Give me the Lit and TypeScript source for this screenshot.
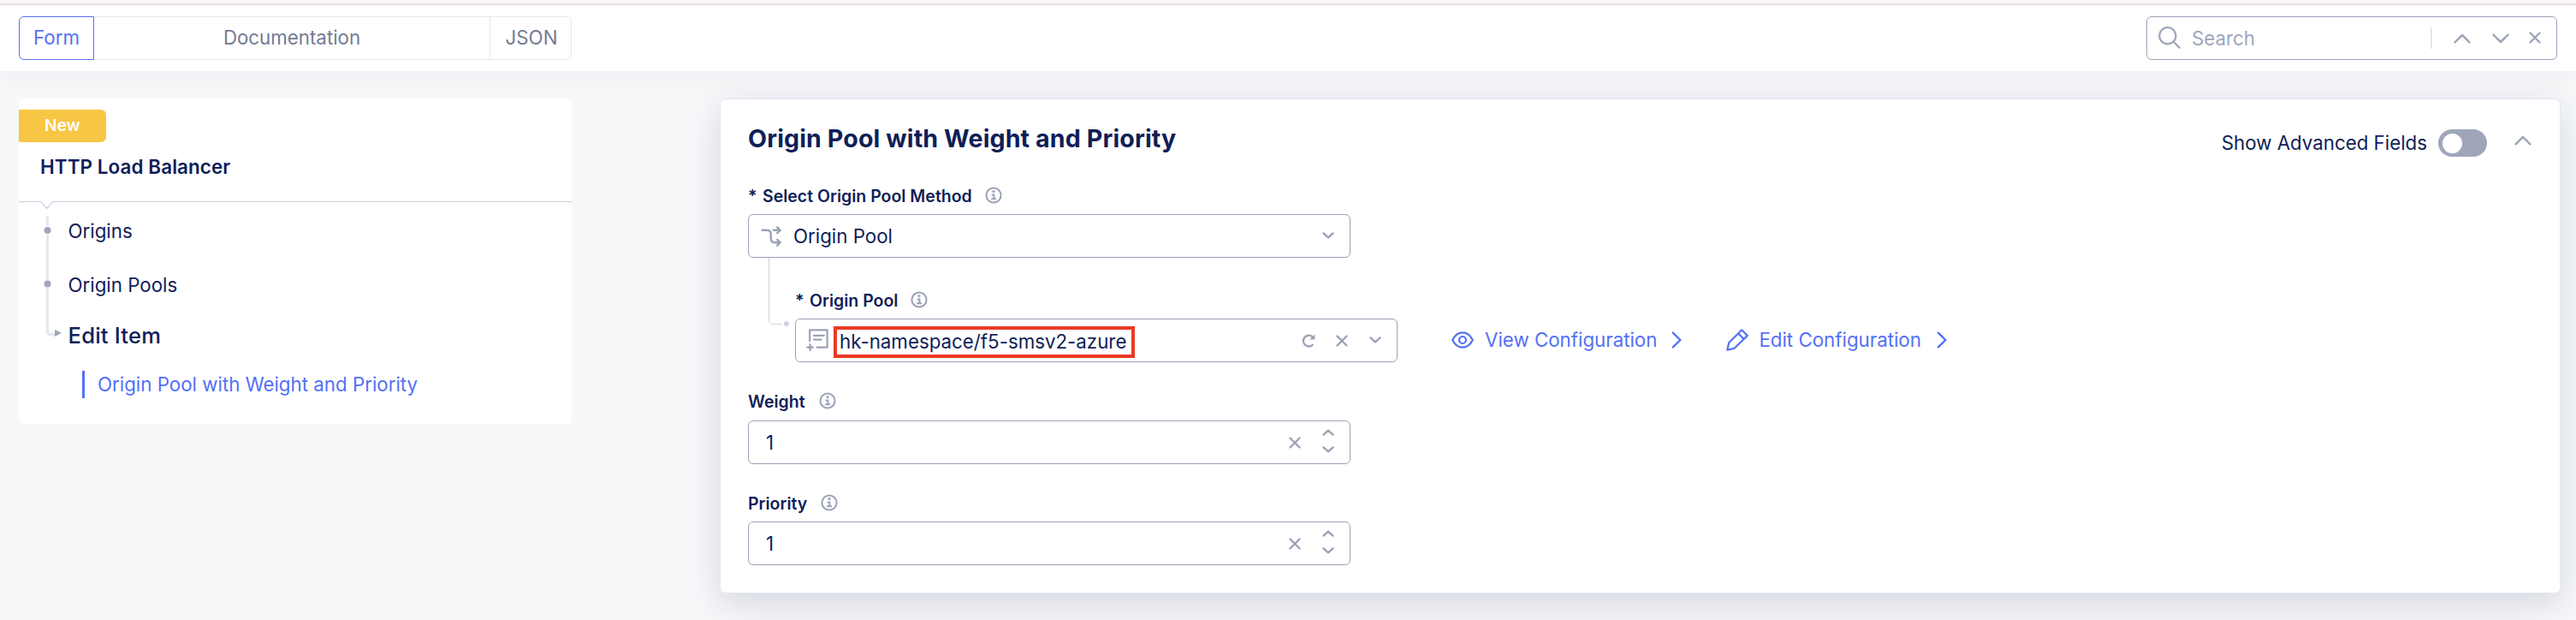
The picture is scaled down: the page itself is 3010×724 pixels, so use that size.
import { LitElement, html, css } from "lit";
import { customElement } from "lit/decorators.js";

const stroke = (w: number, h: number, d: string, sw = 2.4) => html`
  <svg class="ico" width=${w} height=${h} viewBox="0 0 ${w} ${h}" fill="none" stroke="currentColor"
    stroke-width=${sw} stroke-linecap="round" stroke-linejoin="round"><path d=${d}></path></svg>`;

const bigUp = () => stroke(20, 12, "M1.5 10.3 L10 2 L18.5 10.3", 2.5);
const bigDown = () => stroke(20, 12, "M1.5 1.7 L10 10 L18.5 1.7", 2.5);
const smallUp = () => stroke(14, 8, "M1.5 6.6 L7 1.6 L12.5 6.6", 2.4);
const smallDown = () => stroke(14, 8, "M1.5 1.4 L7 6.4 L12.5 1.4", 2.4);
const cross = () => stroke(14, 14, "M1.5 1.5 L12.5 12.5 M12.5 1.5 L1.5 12.5", 2.4);
const right = () => stroke(12, 20, "M1.8 1.6 L10.4 10 L1.8 18.4", 2.4);

const info = () => html`
  <svg class="info" width="20" height="20" viewBox="0 0 20 20" fill="none" stroke="currentColor">
    <circle cx="10" cy="10" r="8.6" stroke-width="2"></circle>
    <circle cx="10" cy="5.6" r="1.6" fill="currentColor" stroke="none"></circle>
    <path d="M7.6 9.4 H10.4 V14 M7.2 14.3 H13" stroke-width="2"></path>
  </svg>`;

const search = () => html`
  <svg width="26" height="26" viewBox="0 0 26 26" fill="none" stroke="currentColor" stroke-width="2.2" stroke-linecap="round">
    <circle cx="10.8" cy="10.8" r="9.6"></circle><path d="M18 18 L24.6 24.6"></path>
  </svg>`;

const branch = () => html`
  <svg width="24" height="24" viewBox="0 0 24 24" fill="none" stroke="currentColor" stroke-width="2.4" stroke-linecap="round" stroke-linejoin="round">
    <path d="M1.6 4.8 H7 Q11.8 4.8 11.8 9.6 V14.6 Q11.8 19.2 16.2 19.2 H22"></path>
    <path d="M14.8 4.8 H22 M19.2 1.4 L22.6 4.8 L19.2 8.2 M19.2 15.8 L22.6 19.2 L19.2 22.6"></path>
  </svg>`;

const listAdd = () => html`
  <svg width="26" height="26" viewBox="0 0 26 26" fill="none" stroke="currentColor" stroke-width="2.2" stroke-linecap="round" stroke-linejoin="round">
    <path d="M4.2 14.2 V1.4 H24.6 V21.6 H12.6"></path>
    <path d="M9 7.8 H21 M9 12.6 H17.4 M4.6 18.2 V25 M1.2 21.6 H8"></path>
  </svg>`;

const refresh = () => html`
  <svg width="16" height="16" viewBox="0 0 16 16" fill="none" stroke="currentColor" stroke-width="2.3" stroke-linecap="round">
    <path d="M12.7 12.8 A6.4 6.4 0 1 1 12.2 3"></path>
    <path d="M15.4 0.4 V6.6 H9.2 Z" fill="currentColor" stroke="none"></path>
  </svg>`;

const eye = () => html`
  <svg width="26" height="20" viewBox="0 0 26 20" fill="none" stroke="currentColor" stroke-width="2.2" stroke-linejoin="round">
    <path d="M1.2 10 C4 4.4 8.2 1.3 13 1.3 C17.8 1.3 22 4.4 24.8 10 C22 15.6 17.8 18.7 13 18.7 C8.2 18.7 4 15.6 1.2 10 Z"></path>
    <circle cx="13" cy="10" r="4"></circle>
  </svg>`;

const pencil = () => html`
  <svg width="26" height="26" viewBox="0 0 26 26" fill="none" stroke="currentColor" stroke-width="2.2" stroke-linejoin="round">
    <path d="M1.3 24.7 L3.2 16.2 L18.2 1.3 L24.8 7.9 L9.6 22.8 Z M14.2 5.4 L20.7 11.9"></path>
  </svg>`;

@customElement("nav-panel")
class NavPanel extends LitElement {
  static styles = css`
    :host { display: block; width: 646px; flex: none; color: #0f1e57; }
    .top { position: relative; height: 121px; box-sizing: border-box; background: #fff; border-radius: 6px; padding-top: 13px; }
    .top::after { content: ""; position: absolute; left: 0; right: 0; bottom: 0; height: 1px; background: #cdd2df; }
    .badge { width: 102px; height: 38px; line-height: 38px; background: #f7c644; color: #fff; border-radius: 0 6px 6px 0; font-size: 19px; font-weight: 600; text-align: center; letter-spacing: .2px; }
    .name { margin: 14px 0 0 25px; line-height: 30px; font-size: 22.4px; font-weight: 600; letter-spacing: .1px; }
    .notch { position: absolute; left: 25px; top: 119px; z-index: 1; }
    .body { height: 259px; box-sizing: border-box; background: #fff; border-radius: 6px; display: flex; }
    .rail { flex: none; width: 57px; }
    .items { padding-top: 19px; font-size: 22.3px; }
    .item { line-height: 30px; padding-left: .5px; }
    .item + .item { margin-top: 33px; }
    .items .current { font-size: 25.6px; margin-top: 29px; font-weight: 500; letter-spacing: .2px; }
    .leaf { margin: 26px 0 0 17px; border-left: 3px solid #5470f6; padding-left: 15px; line-height: 32px; color: #5470f6; }
  `;
  render() {
    return html`
      <div class="top">
        <div class="badge">New</div>
        <div class="name">HTTP Load Balancer</div>
        <svg class="notch" width="16" height="11" viewBox="0 0 16 11"><path d="M0 0 H16 L8 9.4 Z" fill="#fff"></path><path d="M.7 1.5 L7.8 9.3 L14.9 1.5" fill="none" stroke="#cdd2df" stroke-width="1.3"></path></svg>
      </div>
      <div class="body">
        <svg class="rail" width="57" height="180" viewBox="0 0 57 180" fill="none">
          <path d="M33.5 17 V28 M33.5 38 V91 M33.5 100 V152 Q33.5 154.5 36 154.5 H43" stroke="#e4e7f1" stroke-width="3"></path>
          <circle cx="33.5" cy="33" r="4" fill="#9fa6ba"></circle>
          <circle cx="33.5" cy="95.5" r="4" fill="#9fa6ba"></circle>
          <path d="M42 149 L50 153 L42 157 Z" fill="#9fa6ba"></path>
        </svg>
        <div class="items">
          <div class="item">Origins</div>
          <div class="item">Origin Pools</div>
          <div class="item current">Edit Item</div>
          <div class="leaf">Origin Pool with Weight and Priority</div>
        </div>
      </div>`;
  }
}

@customElement("pool-form")
class PoolForm extends LitElement {
  static styles = css`
    :host { display: block; box-sizing: border-box; flex: 1; height: 578px; background: #fff; border: 1px solid #e4e7f1; border-radius: 6px; box-shadow: 0 12px 42px rgba(20, 30, 75, .15); color: #0f1e57; padding: 26px 33px 0 32px; font-size: 22.3px; }
    svg { display: block; flex: none; }
    .head { display: flex; height: 50px; }
    .title { font-size: 28.6px; font-weight: 700; line-height: 40px; flex: 1; letter-spacing: .12px; }
    .adv { line-height: 50px; }
    .toggle { width: 57px; height: 32px; box-sizing: border-box; border-radius: 16px; background: #9fa6ba; margin: 9px 32px 0 13px; padding: 4.5px; }
    .knob { width: 23px; height: 23px; border-radius: 50%; background: #fff; }
    .chev { color: #9fa6ba; margin-top: 16px; }
    .label { display: flex; align-items: center; height: 30px; line-height: 30px; font-size: 19.5px; font-weight: 600; white-space: nowrap; }
    .label .info { color: #9ba2b6; margin: -3px 0 0 16px; }
    .star { width: 17px; }
    .label .star + .info { margin-left: 15px; }
    .first { margin-top: 22px; }
    .box { width: 704px; height: 51px; box-sizing: border-box; border: 1px solid #9ba2b6; border-radius: 6px; margin-top: 6px; display: flex; align-items: center; color: #9ba2b6; }
    .val { color: #0f1e57; flex: 1; }
    .branch { margin-left: 14px; }
    .branch + .val { margin-left: 14px; }
    .down { margin: -2px 18px 0 0; }
    .nest { display: flex; height: 122px; }
    .wire { width: 55px; }
    .sub { padding-top: 35px; }
    .line { display: flex; align-items: center; }
    .listadd { margin: -2px 6px 0 12px; }
    .mark { box-sizing: border-box; width: 352px; height: 37px; border: 4px solid #ea3a24; line-height: 27px; padding-left: 3px; margin-top: 3px; color: #0f1e57; white-space: nowrap; }
    .grow { flex: 1; }
    .g1 { margin-right: 24px; }
    .g2 { margin-right: 25px; }
    .link { display: flex; align-items: center; color: #5470f6; margin-top: 5px; line-height: 30px; }
    .view { margin-left: 63px; }
    .edit { margin-left: 52px; }
    .txt { margin: 0 17px 0 13px; white-space: nowrap; }
    .edit .txt { margin: 0 18px 0 12px; }
    .gap { margin-top: 31px; }
    .gap .n { margin-top: 7px; }
    .gap2 { margin-top: 31px; }
    .n .val { padding-left: 20px; }
    .spin { display: grid; gap: 12px; margin: -3px 18px 0 25px; }
  `;
  number(label: string, value: string, cls: string) {
    return html`<div class=${cls}>
      <div class="label">${label}${info()}</div>
      <div class="box n"><div class="val">${value}</div>${cross()}<div class="spin">${smallUp()}${smallDown()}</div></div>
    </div>`;
  }
  render() {
    return html`
      <div class="head">
        <div class="title">Origin Pool with Weight and Priority</div>
        <div class="adv">Show Advanced Fields</div>
        <div class="toggle"><div class="knob"></div></div>
        <div class="chev">${bigUp()}</div>
      </div>
      <div class="label first"><span class="star">*</span>Select Origin Pool Method${info()}</div>
      <div class="box"><div class="branch">${branch()}</div><div class="val">Origin Pool</div><div class="down">${smallDown()}</div></div>
      <div class="nest">
        <svg class="wire" width="55" height="122" viewBox="0 0 55 122" fill="none">
          <path d="M24.5 0 V72 Q24.5 77.5 30 77.5 H40" stroke="#cdd2df"></path><circle cx="45" cy="77" r="3" fill="#cdd2df"></circle>
        </svg>
        <div class="sub">
          <div class="label"><span class="star">*</span>Origin Pool${info()}</div>
          <div class="line">
            <div class="box">
              <div class="listadd">${listAdd()}</div>
              <div class="mark">hk-namespace/f5-smsv2-azure</div>
              <div class="grow"></div>
              <div class="g1">${refresh()}</div><div class="g2">${cross()}</div><div class="down">${smallDown()}</div>
            </div>
            <div class="link view">${eye()}<span class="txt">View Configuration</span>${right()}</div>
            <div class="link edit">${pencil()}<span class="txt">Edit Configuration</span>${right()}</div>
          </div>
        </div>
      </div>
      ${this.number("Weight", "1", "gap")}
      ${this.number("Priority", "1", "gap2")}`;
  }
}

@customElement("app-root")
class AppRoot extends LitElement {
  static styles = css`
    :host { display: block; width: 3010px; height: 724px; overflow: hidden; background: #f7f8fa; font-family: Inter, sans-serif; }
    .strip { height: 4px; background: #fcf7f8; }
    .bar { box-sizing: border-box; height: 79px; background: #fff; border-top: 2px solid #e4e0e3; box-shadow: 0 10px 30px rgba(30, 35, 50, .04); display: flex; justify-content: space-between; padding: 13px 22px 0; }
    .tabs { display: flex; height: 51px; width: 646px; line-height: 48px; font-size: 22.3px; color: #737b92; text-align: center; }
    .tab { box-sizing: border-box; border: 1px solid #e4e7f1; }
    .form { width: 88px; border-color: #5470f6; color: #5470f6; border-radius: 6px 0 0 6px; }
    .doc { flex: 1; border-left: 0; border-right: 0; }
    .json { width: 96px; border-radius: 0 6px 6px 0; padding-left: 2px; }
    .search { box-sizing: border-box; width: 480px; height: 51px; border: 1px solid #9ba2b6; border-radius: 6px; display: flex; align-items: center; color: #9fa6ba; font-size: 22.3px; padding-left: 13px; }
    .search svg { display: block; flex: none; }
    .search > svg { margin-top: -2px; }
    .ph { flex: 1; margin-left: 13px; }
    .sep { width: 2px; height: 25px; background: #e4e7f1; margin-right: 25px; }
    .up { margin-right: 25px; }
    .dn { margin-right: 23px; }
    .x { margin: -1px 18px 0 0; }
    .main { display: flex; align-items: flex-start; gap: 173px; padding: 32px 18px 0 22px; }
  `;
  render() {
    return html`
      <div class="strip"></div>
      <div class="bar">
        <div class="tabs"><div class="tab form">Form</div><div class="tab doc">Documentation</div><div class="tab json">JSON</div></div>
        <div class="search">${search()}<div class="ph">Search</div><div class="sep"></div>
          <div class="up">${bigUp()}</div><div class="dn">${bigDown()}</div><div class="x">${cross()}</div></div>
      </div>
      <div class="main"><nav-panel></nav-panel><pool-form></pool-form></div>`;
  }
}
